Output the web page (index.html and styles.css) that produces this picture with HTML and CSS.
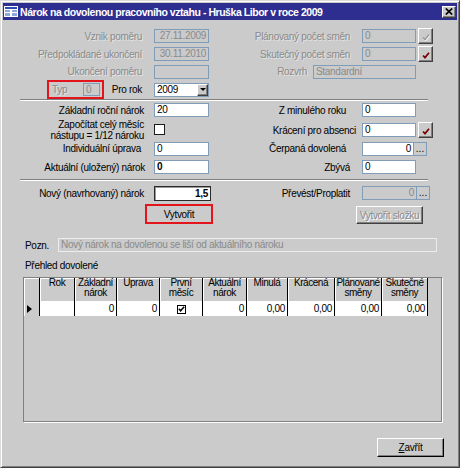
FILE: index.html
```html
<!DOCTYPE html>
<html lang="cs">
<head>
<meta charset="utf-8">
<title>Nárok na dovolenou pracovního vztahu</title>
<link rel="stylesheet" href="styles.css">
</head>
<body>
<div class="window">
  <div class="titlebar">
    <svg class="appicon" width="14" height="11" viewBox="0 0 14 11">
      <rect x="0" y="0" width="14" height="11" fill="#ffffff"/>
      <rect x="1" y="1" width="12" height="2" fill="#2a4cb4"/>
      <rect x="1" y="4" width="5" height="2" fill="#8fa8dc"/>
      <rect x="8" y="4" width="5" height="2" fill="#8fa8dc"/>
      <rect x="1" y="7" width="5" height="3" fill="#8fa8dc"/>
      <rect x="8" y="7" width="5" height="3" fill="#8fa8dc"/>
    </svg>
    <span class="title">Nárok na dovolenou pracovního vztahu - Hruška Libor v roce 2009</span>
    <span class="closebtn"><svg width="8" height="7" viewBox="0 0 8 7"><path d="M0.8 0.5 L7.2 6.5 M7.2 0.5 L0.8 6.5" stroke="#000" stroke-width="1.7"/></svg></span>
  </div>

  <div class="client">
    <div class="top">
      <div class="row h18">
        <div class="lbl l dis">Vznik poměru</div>
        <div class="field dis num">27.11.2009</div>
        <div class="lbl r dis">Plánovaný počet směn</div>
        <div class="field dis">0</div>
        <span></span>
        <div class="chkbtn"><svg width="8" height="7" viewBox="0 0 8 7"><path d="M1.5 4.5 L3.5 6.5 L7.5 1.5" stroke="#ffffff" stroke-width="1.6" fill="none"/><path d="M1 3.5 L3 5.6 L7 0.8" stroke="#9a9a9a" stroke-width="1.6" fill="none"/></svg></div>
      </div>
      <div class="row h18">
        <div class="lbl l dis">Předpokládané ukončení</div>
        <div class="field dis num">30.11.2010</div>
        <div class="lbl r dis">Skutečný počet směn</div>
        <div class="field dis">0</div>
        <span></span>
        <div class="chkbtn"><svg width="8" height="7" viewBox="0 0 8 7"><path d="M1 3.5 L3 5.6 L7 0.8" stroke="#7a0000" stroke-width="1.7" fill="none"/></svg></div>
      </div>
      <div class="row h17">
        <div class="lbl l dis">Ukončení poměru</div>
        <div class="field dis"></div>
        <div class="rpair">
          <span class="lbl dis">Rozvrh</span>
          <div class="field dis wide">Standardní</div>
        </div>
      </div>
      <div class="row h19">
        <div class="typcell">
          <div class="redbox typ">
            <span class="dis">Typ</span>
            <div class="field dis small">0</div>
          </div>
          <span class="prorok">Pro rok</span>
        </div>
        <div class="combo">
          <span class="combotext">2009</span>
          <span class="combobtn"><span class="down"></span></span>
        </div>
      </div>
    </div>

    <div class="sep"></div>

    <div class="mid">
      <div class="row h18">
        <div class="lbl l">Základní roční nárok</div>
        <div class="field">20</div>
        <div class="lbl r e346">Z minulého roku</div>
        <div class="field">0</div>
      </div>
      <div class="row h20">
        <div class="lbl l two">Započítat celý měsíc<br>nástupu = 1/12 nároku</div>
        <div class="cbwrap"><span class="checkbox"></span></div>
        <div class="lbl r e356">Krácení pro absenci</div>
        <div class="field">0</div>
        <span></span>
        <div class="chkbtn"><svg width="8" height="7" viewBox="0 0 8 7"><path d="M1 3.5 L3 5.6 L7 0.8" stroke="#7a0000" stroke-width="1.7" fill="none"/></svg></div>
      </div>
      <div class="row h19">
        <div class="lbl l e141">Individuální úprava</div>
        <div class="field">0</div>
        <div class="lbl r e346">Čerpaná dovolená</div>
        <div class="dots">
          <div class="field num">0</div>
          <span class="dotbtn">...</span>
        </div>
      </div>
      <div class="row h18">
        <div class="lbl l e145">Aktuální (uložený) nárok</div>
        <div class="field bold">0</div>
        <div class="lbl r">Zbývá</div>
        <div class="field">0</div>
      </div>
    </div>

    <div class="sep sep2"></div>

    <div class="row h20 newrow">
      <div class="lbl l">Nový (navrhovaný) nárok</div>
      <div class="field strong num bold">1,5</div>
      <div class="lbl r">Převést/Proplatit</div>
      <div class="dots dots2">
        <div class="field dis num">0</div>
        <span class="dotbtn">...</span>
      </div>
    </div>

    <div class="actions">
      <div class="redbox create">Vytvořit</div>
      <div class="btn disabled folder">Vytvořit složku</div>
    </div>

    <div class="note">
      <span class="notelbl">Pozn.</span>
      <div class="notefield">Nový nárok na dovolenou se liší od aktuálního nároku</div>
    </div>

    <div class="gridtitle">Přehled dovolené</div>

    <div class="sheet">
      <table class="grid">
        <colgroup>
          <col class="w16"><col class="w35"><col class="w42"><col class="w43"><col class="w43"><col class="w44"><col class="w41"><col class="w47"><col class="w47"><col class="w46">
        </colgroup>
        <thead>
          <tr>
            <th></th><th>Rok</th><th>Základní<br>nárok</th><th>Úprava</th><th>První<br>měsíc</th><th>Aktuální<br>nárok</th><th>Minulá</th><th>Krácená</th><th>Plánované<br>směny</th><th>Skutečné<br>směny</th>
          </tr>
        </thead>
        <tbody>
          <tr>
            <td class="selcell"><span class="arrow"></span></td>
            <td></td>
            <td>0</td>
            <td>0</td>
            <td class="ckcell"><span class="tick"><svg width="7" height="6" viewBox="0 0 7 6"><path d="M0.8 2.8 L2.6 4.8 L6.2 0.8" stroke="#000" stroke-width="1.5" fill="none"/></svg></span></td>
            <td>0</td>
            <td>0,00</td>
            <td>0,00</td>
            <td>0,00</td>
            <td>0,00</td>
          </tr>
        </tbody>
      </table>
    </div>

    <div class="footer">
      <div class="btn close"><span class="ul">Z</span>avřít</div>
    </div>
  </div>
</div>
</body>
</html>
```

FILE: styles.css
```css
* { box-sizing: border-box; }
html, body { margin: 0; padding: 0; }
body {
  width: 460px;
  height: 468px;
  overflow: hidden;
  background: #cbcbcb;
  font-family: "Liberation Sans", Arial, sans-serif;
  font-size: 10px;
  letter-spacing: -0.3px;
  color: #000;
}

.window {
  width: 460px;
  height: 468px;
  background: #cbcbcb;
  border: 1px solid;
  border-color: #dcdcdc #404040 #404040 #dcdcdc;
  box-shadow: inset 1px 1px 0 #ffffff, inset -1px -1px 0 #808080;
  padding: 2px;
  display: flex;
  flex-direction: column;
}

/* title bar */
.titlebar {
  height: 17px;
  flex: none;
  background: #2e2e90;
  display: flex;
  align-items: center;
  padding: 0 1px;
  color: #fff;
}
.appicon { flex: none; margin-right: 2px; }
.title {
  flex: 1;
  font-weight: bold;
  font-size: 10.5px;
  white-space: nowrap;
  overflow: hidden;
  letter-spacing: -0.45px;
}
.closebtn {
  flex: none;
  width: 14px;
  height: 12px;
  background: #cbcbcb;
  border: 1px solid;
  border-color: #ffffff #404040 #404040 #ffffff;
  box-shadow: inset -1px -1px 0 #808080;
  display: flex;
  align-items: center;
  justify-content: center;
}

.client {
  flex: 1;
  padding-left: 1px;
  display: flex;
  flex-direction: column;
}

/* form grid rows */
.top { margin-top: 7px; }
.row {
  display: grid;
  grid-template-columns: 150px 55px 153px 54px 2px 15px;
  align-items: center;
}
.h17 { height: 17px; }
.h18 { height: 18px; }
.h19 { height: 19px; }
.h20 { height: 20px; }

.lbl {
  text-align: right;
  white-space: nowrap;
  line-height: 11px;
}
.lbl.l { padding-right: 10px; }
.top .lbl.l { padding-right: 12px; }
.lbl.r { padding-right: 12px; }
.lbl.e346 { padding-right: 16px; }
.lbl.e356 { padding-right: 6px; }
.lbl.e141 { padding-right: 13px; }
.lbl.e145 { padding-right: 9px; }
.lbl.two { line-height: 11px; }

.dis {
  color: #8a8a8a;
  text-shadow: 1px 1px 0 #e4e4e4;
}

.field {
  height: 14px;
  border: 1px solid #7f9db9;
  background: #fff;
  padding: 0 2px;
  line-height: 12px;
  white-space: nowrap;
  overflow: hidden;
}
.field.dis { background: #cbcbcb; text-shadow: none; }
.field.num { text-align: right; }
.field.bold { font-weight: bold; }
.field.wide { width: 103px; }
.field.small { width: 17px; height: 13px; line-height: 11px; }
.field.strong {
  width: 57px;
  height: 15px;
  border: 1px solid #2a2a2a;
  box-shadow: inset 1px 1px 0 #9a9a9a;
  line-height: 13px;
}

.rpair {
  grid-column: 3 / 5;
  display: flex;
  justify-content: flex-end;
  align-items: center;
  gap: 6px;
}

.typcell {
  display: flex;
  align-items: center;
  padding-left: 43px;
  padding-right: 12px;
  height: 19px;
}
.redbox {
  border: 2px solid #e3141c;
}
.typ {
  width: 57px;
  height: 19px;
  display: flex;
  align-items: center;
  justify-content: space-between;
  padding: 0 2px 0 3px;
}
.prorok { margin-left: auto; }

.combo {
  height: 14px;
  border: 1px solid #7f9db9;
  background: #fff;
  display: flex;
  align-items: center;
  padding-left: 2px;
}
.combotext { flex: 1; line-height: 12px; }
.combobtn {
  width: 11px;
  height: 12px;
  background: #cbcbcb;
  border: 1px solid;
  border-color: #ffffff #404040 #404040 #ffffff;
  box-shadow: inset -1px -1px 0 #808080;
  display: flex;
  align-items: center;
  justify-content: center;
}
.down {
  width: 0;
  height: 0;
  border-left: 3px solid transparent;
  border-right: 3px solid transparent;
  border-top: 3px solid #000;
}

.chkbtn {
  width: 15px;
  height: 16px;
  background: #cbcbcb;
  border: 1px solid;
  border-color: #ffffff #404040 #404040 #ffffff;
  box-shadow: inset -1px -1px 0 #808080;
  display: flex;
  align-items: center;
  justify-content: center;
  padding-top: 2px;
}

.cbwrap { display: flex; align-items: center; margin-top: -1px; }
.checkbox {
  width: 11px;
  height: 11px;
  border: 1px solid #1c1c1c;
  background: #fff;
}

.dots {
  grid-column: 4 / 7;
  display: flex;
}
.dots .field { width: 52px; }
.dots2 .field { width: 55px; }
.dotbtn {
  width: 13px;
  height: 14px;
  border: 1px solid #7f9db9;
  border-left: none;
  background: #cbcbcb;
  font-size: 10px;
  letter-spacing: 0;
  line-height: 10px;
  display: flex;
  justify-content: center;
  align-items: flex-end;
  padding-bottom: 1px;
}

.sep {
  height: 2px;
  margin: 0 29px 0 16px;
  border-top: 1px solid #808080;
  border-bottom: 1px solid #ffffff;
  flex: none;
}
.sep2 { margin-top: 3px; }
.newrow { margin-top: 2px; }

.actions {
  display: flex;
  align-items: flex-start;
  padding-left: 141px;
  margin-top: 1px;
}
.create {
  width: 68px;
  height: 20px;
  display: flex;
  align-items: center;
  justify-content: center;
}
.btn {
  background: #cbcbcb;
  border: 1px solid;
  border-color: #ffffff #404040 #404040 #ffffff;
  box-shadow: inset -1px -1px 0 #808080;
  display: flex;
  align-items: center;
  justify-content: center;
  white-space: nowrap;
}
.btn.disabled { color: #8a8a8a; text-shadow: 1px 1px 0 #ffffff; }
.folder {
  width: 67px;
  height: 18px;
  margin-left: 143px;
  margin-top: 2px;
}

.note {
  display: flex;
  align-items: center;
  margin-top: 14px;
  padding-left: 21px;
  height: 14px;
}
.notelbl { width: 33px; }
.notefield {
  width: 379px;
  height: 14px;
  border: 1px solid #ececec;
  color: #8a8a8a;
  padding: 0 2px;
  line-height: 12px;
  white-space: nowrap;
  overflow: hidden;
}

.gridtitle {
  margin-top: 8px;
  padding-left: 21px;
  line-height: 12px;
  height: 12px;
}

.sheet {
  margin-top: 5px;
  margin-left: 19px;
  width: 419px;
  height: 145px;
  border: 1px solid #808080;
  box-shadow: 1px 1px 0 #ffffff;
  flex: none;
}
.grid {
  table-layout: fixed;
  border-collapse: separate;
  border-spacing: 0;
  width: 404px;
}
.w16 { width: 16px; }
.w35 { width: 35px; }
.w41 { width: 41px; }
.w42 { width: 42px; }
.w43 { width: 43px; }
.w44 { width: 44px; }
.w46 { width: 46px; }
.w47 { width: 47px; }

.grid th {
  height: 23px;
  padding: 0;
  font-weight: normal;
  text-align: center;
  vertical-align: top;
  line-height: 10px;
  letter-spacing: -0.45px;
  background: #cbcbcb;
  border-right: 1px solid #000;
  box-shadow: inset 1px 1px 0 #ffffff;
  white-space: nowrap;
  overflow: hidden;
}
.grid td {
  height: 15px;
  padding: 0 2px;
  text-align: right;
  background: #fff;
  border-right: 1px solid #000;
  line-height: 13px;
  white-space: nowrap;
}
.grid td.selcell {
  background: #cbcbcb;
  text-align: left;
  padding-left: 3px;
  box-shadow: inset 1px 0 0 #ffffff;
}
.arrow {
  display: inline-block;
  width: 0;
  height: 0;
  border-top: 4px solid transparent;
  border-bottom: 4px solid transparent;
  border-left: 5px solid #000;
  vertical-align: middle;
}
.grid td.ckcell { text-align: center; padding: 0; }
.tick {
  display: inline-flex;
  width: 9px;
  height: 9px;
  border: 1px solid #000;
  align-items: center;
  justify-content: center;
  vertical-align: middle;
  background: #fff;
}

.footer {
  display: flex;
  justify-content: flex-end;
  padding-right: 13px;
  margin-top: 16px;
}
.close {
  width: 67px;
  height: 19px;
  border-color: #ffffff #000000 #000000 #ffffff;
}
.ul { text-decoration: underline; }
```
